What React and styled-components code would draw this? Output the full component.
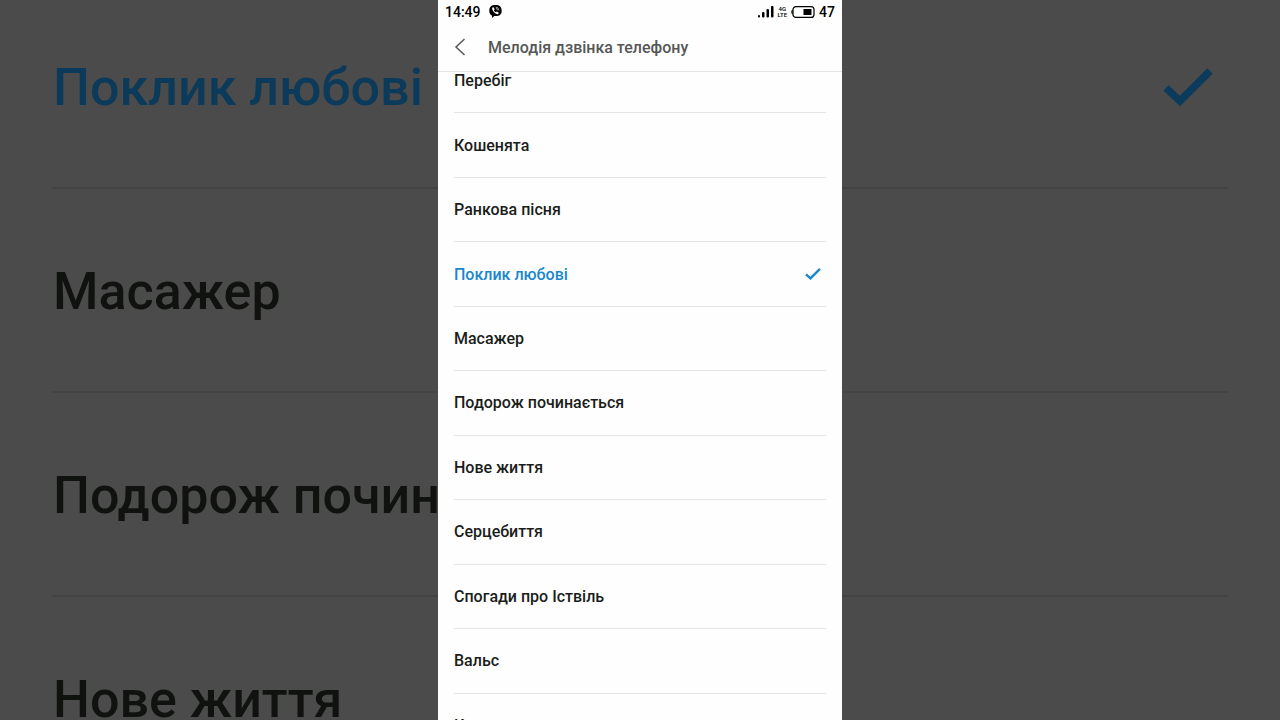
import React, {useState} from 'react'
import styled, {createGlobalStyle} from 'styled-components'

const melodies = [
    'Перебіг',
    'Кошенята',
    'Ранкова пісня',
    'Поклик любові',
    'Масажер',
    'Подорож починається',
    'Нове життя',
    'Серцебиття',
    'Спогади про Іствіль',
    'Вальс',
    'Казка',
]

const enlarged = melodies.slice(3, 7)

export default function App() {
    const [selected, setSelected] = useState('Поклик любові')

    return (
        <Page>
            <GlobalStyle/>
            <Backdrop aria-hidden="true">
                {enlarged.map(name => (
                    <BackdropRow key={name} $active={name === selected}>
                        {name}
                        {name === selected && <CheckIcon width={50} height={38}/>}
                    </BackdropRow>
                ))}
            </Backdrop>
            <Phone>
                <StatusBar>
                    <StatusGroup $gap={8}>
                        <span>14:49</span>
                        <ViberIcon/>
                    </StatusGroup>
                    <StatusGroup $gap={4}>
                        <SignalIcon/>
                        <Network>
                            <span>4G</span>
                            <span>LTE</span>
                        </Network>
                        <BatteryIcon/>
                        <span>47</span>
                    </StatusGroup>
                </StatusBar>
                <Header>
                    <BackButton type="button" aria-label="Назад">
                        <svg width="12" height="18" viewBox="0 0 12 18" fill="none" stroke="currentColor" strokeWidth="1.5">
                            <path d="M10.5 1 2 9l8.500 8"/>
                        </svg>
                    </BackButton>
                    <Title>Мелодія дзвінка телефону</Title>
                </Header>
                <Viewport>
                    <List>
                        {melodies.map(name => (
                            <Row key={name} $active={name === selected}>
                                <Radio
                                    type="radio"
                                    name="melody"
                                    checked={name === selected}
                                    onChange={() => setSelected(name)}
                                />
                                <span>{name}</span>
                                {name === selected && <CheckIcon width={16} height={12}/>}
                            </Row>
                        ))}
                    </List>
                </Viewport>
            </Phone>
        </Page>
    )
}

function CheckIcon({width, height}) {
    return (
        <svg width={width} height={height} viewBox="0 0 50 38" fill="none" stroke="currentColor" strokeWidth="7.500">
            <path d="M3 20 17 33 47 3"/>
        </svg>
    )
}

function ViberIcon() {
    return (
        <svg width="13" height="13" viewBox="0 0 13 13">
            <path fill="#000" d="M6.500 0C2.300 0 .3 1.900.3 5.700c0 2.500.9 4.100 2.700 4.900V13l2.300-1.900h1.200c4.200 0 6.200-1.700 6.200-5.400S10.700 0 6.500 0z"/>
            <path fill="#fff" d="M4 2.300c-.9.400-1.100 1.100-.7 2.100.9 2.200 2.300 3.700 4.400 4.600.9.400 1.600.1 2-.8.1-.3 0-.5-.3-.7L8.200 6.700c-.3-.2-.6-.1-.9.300-.2.300-.5.300-.8.100-.7-.4-1.100-.9-1.400-1.600-.1-.3 0-.5.2-.7.400-.3.400-.6.200-.9L4.600 2.500c-.2-.2-.3-.3-.6-.2z"/>
            <path fill="none" stroke="#fff" strokeWidth=".7" d="M6.700 2.200c2 .1 3 1.200 3.100 3.200M6.900 3.600c1 .1 1.500.6 1.500 1.600"/>
        </svg>
    )
}

function SignalIcon() {
    return (
        <svg width="16" height="12" viewBox="0 0 16 12">
            <rect x="0" y="9" width="2" height="2.500" rx="1"/>
            <rect x="4" y="6" width="2.500" height="5.500" rx="1"/>
            <rect x="8.500" y="3" width="2.500" height="8.500" rx="1"/>
            <rect x="13" y="0" width="2.500" height="11.500" rx="1"/>
        </svg>
    )
}

function BatteryIcon() {
    return (
        <svg width="24" height="12" viewBox="0 0 24 12">
            <rect x="2" y=".6" width="21" height="10.800" rx="3" fill="none" stroke="#000" strokeWidth="1.200"/>
            <path d="M1.600 3.500C.6 4 .3 4.800.3 6s.3 2 1.300 2.500z"/>
            <rect x="12.500" y="3" width="8" height="6"/>
        </svg>
    )
}

const GlobalStyle = createGlobalStyle`
    * {
        box-sizing: border-box;
    }
    body {
        margin: 0;
        background: #4b4b4b;
        font-family: Roboto, "Noto Sans", sans-serif;
        font-weight: 500;
    }
`
const Page = styled.div`
    display: grid;
    grid-template: 100vh / 100%;
    overflow: hidden;
`
const Backdrop = styled.div`
    grid-area: 1 / 1;
    padding: 0 52px;
    margin-top: -15px;
    overflow: hidden;
`
const BackdropRow = styled.div`
    display: flex;
    align-items: center;
    justify-content: space-between;
    height: 204px;
    padding: 2px 15px 0 1px;
    border-bottom: 2px solid #444444;
    font-size: 52px;
    white-space: nowrap;
    color: ${({$active}) => $active ? '#0c3a5a' : '#10120f'};
`
const Phone = styled.main`
    grid-area: 1 / 1;
    z-index: 1;
    display: flex;
    flex-direction: column;
    justify-self: center;
    width: 100%;
    max-width: 404px;
    background: #fdfefd;
`
const StatusBar = styled.div`
    display: flex;
    align-items: center;
    justify-content: space-between;
    height: 23px;
    padding: 0 7px;
    font-size: 14px;
    color: #000;
`
const StatusGroup = styled.div`
    display: flex;
    align-items: center;
    gap: ${({$gap}) => $gap}px;
`
const Network = styled.div`
    display: flex;
    flex-direction: column;
    align-items: center;
    font-size: 6px;
    line-height: 6px;
`
const Header = styled.header`
    display: flex;
    align-items: center;
    gap: 22px;
    height: 49px;
    padding: 0 16px;
    border-bottom: 1px solid #e4e5e4;
    color: #555755;
`
const BackButton = styled.button`
    display: flex;
    padding: 0;
    border: none;
    background: transparent;
    color: inherit;
    cursor: pointer;
`
const Title = styled.h1`
    margin: 0;
    font-size: 16px;
    font-weight: 500;
`
const Viewport = styled.div`
    flex: 1;
    min-height: 0;
    overflow: hidden;
`
/* scrolled a little, so the first and last rows are cut off */
const List = styled.div`
    display: grid;
    grid-auto-rows: 1fr;
    height: calc(100% + 61px);
    margin-top: -23px;
    padding: 0 16px;
`
const Row = styled.label`
    display: flex;
    align-items: center;
    justify-content: space-between;
    padding-right: 5px;
    border-bottom: 1px solid #e4e5e4;
    font-size: 16px;
    color: ${({$active}) => $active ? '#1a87cd' : '#1b1d1b'};
    cursor: pointer;
`
const Radio = styled.input`
    appearance: none;
    position: absolute;
    margin: 0;
    outline: none;
`
